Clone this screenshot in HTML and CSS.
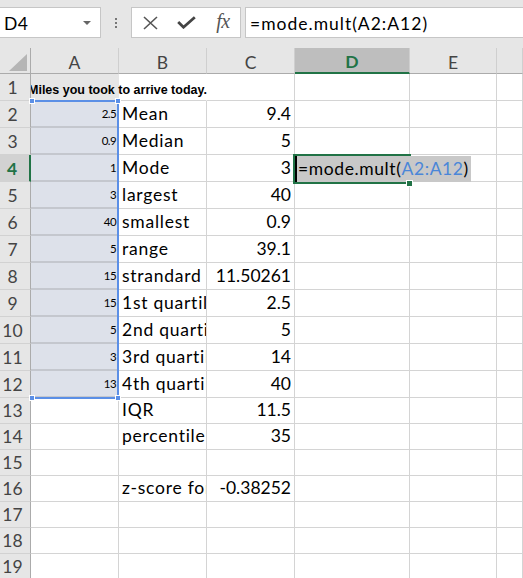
FILE: index.html
```html
<!DOCTYPE html>
<html>
<head>
<meta charset="utf-8">
<link rel="stylesheet" href="styles.css">
</head>
<body>
<div class="toolbar">
  <div class="namebox"><span class="nb-text">D4</span><svg class="nb-arrow" width="8" height="4" viewBox="0 0 8 4"><path d="M0 0 H8 L4 4 Z" fill="#666"/></svg></div>
  <div class="grip"><i></i><i></i><i></i></div>
  <div class="fbtns">
    <span class="fbtn"><svg width="15" height="14" viewBox="0 0 15 14"><path d="M1 1 L14 13 M14 1 L1 13" stroke="#555" stroke-width="1.6" fill="none"/></svg></span>
    <span class="fbtn"><svg width="19" height="13" viewBox="0 0 19 13"><path d="M1.2 6 L6.5 11.2 L17.8 1.2" stroke="#444" stroke-width="2.8" fill="none"/></svg></span>
    <span class="fbtn fx">fx</span>
  </div>
  <div class="formula">=mode.mult(A2:A12)</div>
</div>
<div class="sheet">
  <div class="ch corner"><svg width="31" height="26" viewBox="0 0 31 26"><path d="M27 6 V23 H9 Z" fill="#b5b5b5"/></svg></div>
  <div class="ch">A</div><div class="ch">B</div><div class="ch">C</div><div class="ch act">D</div><div class="ch">E</div><div class="ch"></div>

  <div class="rh">1</div><div class="c title"><span>Miles you took to arrive today.</span></div><div class="c nor"></div><div class="c"></div><div class="c"></div><div class="c"></div><div class="c"></div>
  <div class="rh">2</div><div class="c sel sm n">2.5</div><div class="c">Mean</div><div class="c n">9.4</div><div class="c"></div><div class="c"></div><div class="c"></div>
  <div class="rh">3</div><div class="c sel sm n">0.9</div><div class="c">Median</div><div class="c n">5</div><div class="c"></div><div class="c"></div><div class="c"></div>
  <div class="rh act">4</div><div class="c sel sm n">1</div><div class="c">Mode</div><div class="c n">3</div><div class="c"></div><div class="c"></div><div class="c"></div>
  <div class="rh">5</div><div class="c sel sm n">3</div><div class="c">largest</div><div class="c n">40</div><div class="c"></div><div class="c"></div><div class="c"></div>
  <div class="rh">6</div><div class="c sel sm n">40</div><div class="c">smallest</div><div class="c n">0.9</div><div class="c"></div><div class="c"></div><div class="c"></div>
  <div class="rh">7</div><div class="c sel sm n">5</div><div class="c">range</div><div class="c n">39.1</div><div class="c"></div><div class="c"></div><div class="c"></div>
  <div class="rh">8</div><div class="c sel sm n">15</div><div class="c">strandard</div><div class="c n">11.50261</div><div class="c"></div><div class="c"></div><div class="c"></div>
  <div class="rh">9</div><div class="c sel sm n">15</div><div class="c">1st quartile</div><div class="c n">2.5</div><div class="c"></div><div class="c"></div><div class="c"></div>
  <div class="rh">10</div><div class="c sel sm n">5</div><div class="c">2nd quartile</div><div class="c n">5</div><div class="c"></div><div class="c"></div><div class="c"></div>
  <div class="rh">11</div><div class="c sel sm n">3</div><div class="c">3rd quartile</div><div class="c n">14</div><div class="c"></div><div class="c"></div><div class="c"></div>
  <div class="rh">12</div><div class="c sel sm n">13</div><div class="c">4th quartile</div><div class="c n">40</div><div class="c"></div><div class="c"></div><div class="c"></div>
  <div class="rh">13</div><div class="c"></div><div class="c">IQR</div><div class="c n">11.5</div><div class="c"></div><div class="c"></div><div class="c"></div>
  <div class="rh">14</div><div class="c"></div><div class="c">percentile</div><div class="c n">35</div><div class="c"></div><div class="c"></div><div class="c"></div>
  <div class="rh">15</div><div class="c"></div><div class="c"></div><div class="c"></div><div class="c"></div><div class="c"></div><div class="c"></div>
  <div class="rh">16</div><div class="c"></div><div class="c">z-score for</div><div class="c n">-0.38252</div><div class="c"></div><div class="c"></div><div class="c"></div>
  <div class="rh">17</div><div class="c"></div><div class="c"></div><div class="c"></div><div class="c"></div><div class="c"></div><div class="c"></div>
  <div class="rh">18</div><div class="c"></div><div class="c"></div><div class="c"></div><div class="c"></div><div class="c"></div><div class="c"></div>
  <div class="rh">19</div><div class="c"></div><div class="c"></div><div class="c"></div><div class="c"></div><div class="c"></div><div class="c"></div>

  <div class="range">
    <i class="h tl"></i><i class="h tr"></i><i class="h bl"></i><i class="h br"></i>
  </div>
  <div class="edit-box"></div>
  <div class="edit-text">=mode.mult(<span class="ref">A2:A12</span>)</div>
  <i class="fill-handle"></i>
</div>
</body>
</html>
```
FILE: styles.css
```css
* { box-sizing: border-box; }
html, body { margin: 0; padding: 0; overflow: hidden; background: #fff; }
body {
  width: 523px;
  height: 578px;
  font-family: Lato, "Liberation Sans", sans-serif;
  font-size: 17.5px;
  color: #000;
}

/* formula bar */
.toolbar {
  height: 48px;
  background: #e6e6e6;
  display: flex;
  align-items: flex-start;
  padding-top: 7px;
}
.namebox {
  width: 101px;
  height: 31px;
  background: #fff;
  border: 1px solid #c6c6c6;
  border-left: none;
  display: flex;
  align-items: center;
  justify-content: space-between;
  padding: 2px 9px 0 4px;
  letter-spacing: 0.5px;
}
.nb-arrow { margin-top: -1px; }
.grip {
  width: 30px;
  height: 31px;
  display: flex;
  flex-direction: column;
  align-items: center;
  justify-content: center;
  gap: 2px;
}
.grip i {
  display: block;
  width: 2px;
  height: 2px;
  background: #777;
}
.fbtns {
  width: 110px;
  height: 31px;
  background: #fff;
  border: 1px solid #c6c6c6;
  display: flex;
  align-items: center;
}
.fbtn {
  width: 36px;
  display: flex;
  justify-content: center;
  align-items: center;
}
.fx {
  font-family: "Liberation Serif", serif;
  font-style: italic;
  font-size: 20px;
  color: #555;
  letter-spacing: -0.5px;
  padding-bottom: 2px;
  padding-left: 2px;
}
.formula {
  flex: 1;
  margin-left: 4px;
  height: 31px;
  background: #fff;
  border: 1px solid #c6c6c6;
  border-right: none;
  padding: 2px 0 0 4px;
  display: flex;
  align-items: center;
  white-space: nowrap;
  letter-spacing: 1px;
}

/* sheet */
.sheet {
  position: relative;
  display: grid;
  grid-template-columns: 31px 88px 88px 88px 115px 87px 1fr;
  grid-template-rows: 26px repeat(12, 27px) repeat(7, 26px);
}
.ch {
  background: #e6e6e6;
  border-right: 1px solid #cfcfcf;
  border-bottom: 1px solid #ababab;
  display: flex;
  align-items: center;
  justify-content: center;
  padding-top: 3px;
  color: #444;
}
.ch.corner { display: block; padding: 0; border-right-color: #ababab; }
.ch.corner svg { display: block; }
.ch.act {
  background: #bebebe;
  color: #217346;
  font-weight: bold;
  border-bottom: 2px solid #217346;
}
.rh {
  position: relative;
  z-index: 2;
  background: #e6e6e6;
  border-right: 1px solid #ababab;
  border-bottom: 1px solid #d2d2d2;
  display: flex;
  align-items: center;
  justify-content: center;
  padding-right: 5px;
  color: #444;
}
.rh.act {
  background: #d2d2d2;
  color: #217346;
  font-weight: bold;
  border-right: 2px solid #217346;
}
.c {
  border-right: 1px solid #d4d4d4;
  border-bottom: 1px solid #d4d4d4;
  white-space: nowrap;
  overflow: hidden;
  display: flex;
  align-items: flex-end;
  padding: 0 3px 3px 3px;
  line-height: 20px;
  letter-spacing: 0.75px;
}
.n { justify-content: flex-end; letter-spacing: 0; }
.sel {
  background: #dde1ea;
  border-bottom: 2px solid #c4c7ce;
}
.sm {
  font-size: 11.5px;
  line-height: 14px;
  letter-spacing: -0.6px;
  padding: 0 2px 5px 0;
}
.title {
  position: relative;
  z-index: 1;
  overflow: visible;
  background: #e6e6e6;
  border-right-color: transparent;
  font-family: "Liberation Sans", Arial, sans-serif;
  font-weight: bold;
  font-size: 12.5px;
  line-height: 14px;
  letter-spacing: 0;
  padding: 0 0 3px 0;
}
.title span { margin-left: -3px; }
.nor { border-right-color: transparent; }

/* overlays */
.range {
  position: absolute;
  z-index: 3;
  left: 31px;
  top: 52px;
  width: 88px;
  height: 299px;
  border-top: 2px solid #5b8fe6;
  border-right: 2px solid #5b8fe6;
  border-bottom: 2px solid #5b8fe6;
}
.h {
  position: absolute;
  width: 6px;
  height: 6px;
  background: #5b8fe6;
  border: 1px solid #fff;
}
.h.tl { left: -2px; top: -4px; }
.h.tr { right: -4px; top: -4px; }
.h.bl { left: -2px; bottom: -4px; }
.h.br { right: -4px; bottom: -4px; }
.edit-box {
  position: absolute;
  z-index: 3;
  left: 293px;
  top: 106px;
  width: 118px;
  height: 30px;
  border: 2px solid #217346;
}
.edit-text {
  position: absolute;
  z-index: 4;
  left: 295px;
  top: 108px;
  height: 26px;
  line-height: 26px;
  background: #c8c8c8;
  border-left: 2px solid #000;
  padding: 0 2px 0 1px;
  white-space: nowrap;
  letter-spacing: 0.6px;
}
.ref { color: #4a86d8; }
.fill-handle {
  position: absolute;
  z-index: 5;
  left: 406px;
  top: 132px;
  width: 7px;
  height: 7px;
  background: #217346;
  border: 1px solid #fff;
}
```
